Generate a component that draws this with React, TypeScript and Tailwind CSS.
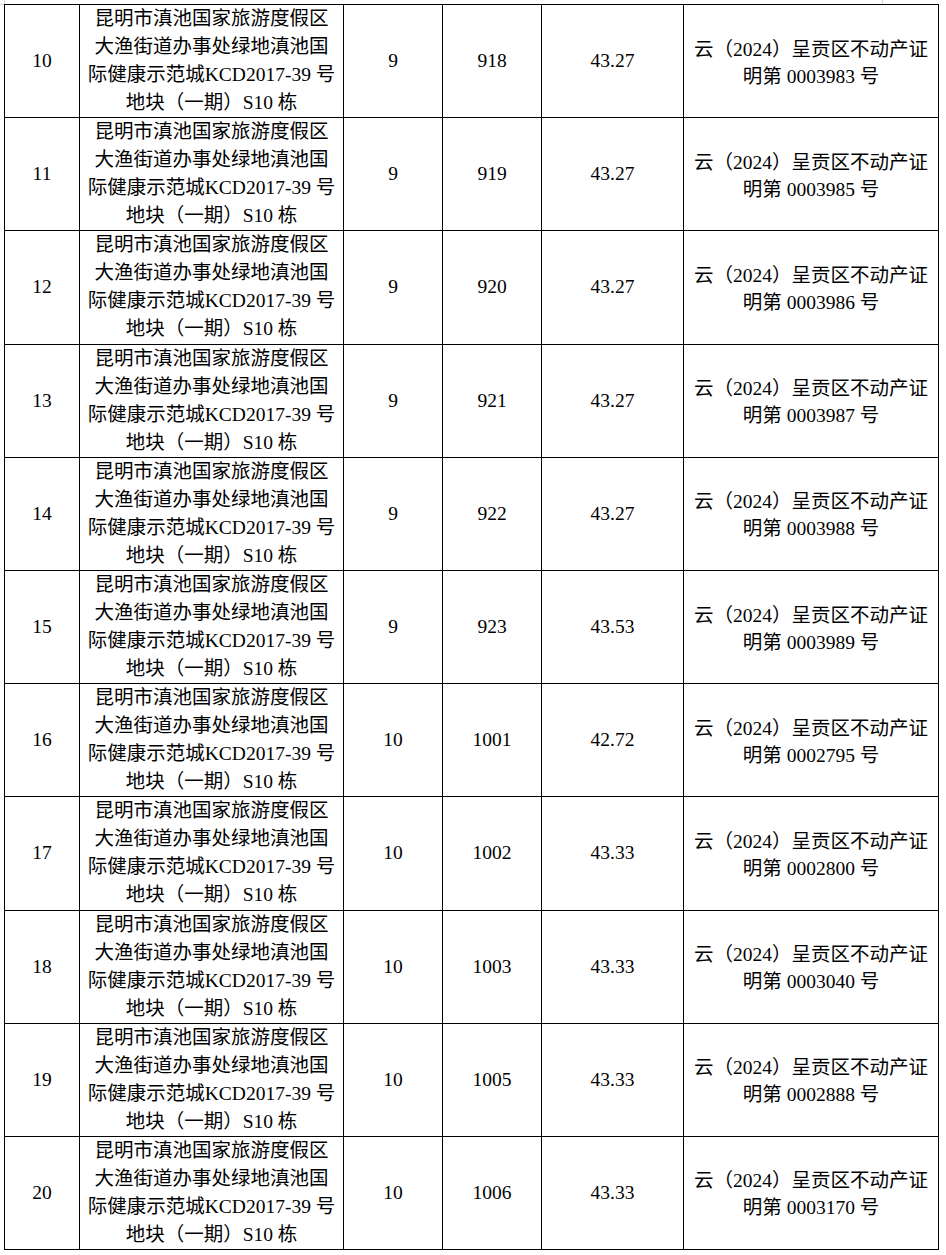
import React from "react";

type Row = {
  no: number;
  floor: number;
  room: number;
  area: string;
  cert: string;
};

const rows: Row[] = [
  { no: 10, floor: 9, room: 918, area: "43.27", cert: "0003983" },
  { no: 11, floor: 9, room: 919, area: "43.27", cert: "0003985" },
  { no: 12, floor: 9, room: 920, area: "43.27", cert: "0003986" },
  { no: 13, floor: 9, room: 921, area: "43.27", cert: "0003987" },
  { no: 14, floor: 9, room: 922, area: "43.27", cert: "0003988" },
  { no: 15, floor: 9, room: 923, area: "43.53", cert: "0003989" },
  { no: 16, floor: 10, room: 1001, area: "42.72", cert: "0002795" },
  { no: 17, floor: 10, room: 1002, area: "43.33", cert: "0002800" },
  { no: 18, floor: 10, room: 1003, area: "43.33", cert: "0003040" },
  { no: 19, floor: 10, room: 1005, area: "43.33", cert: "0002888" },
  { no: 20, floor: 10, room: 1006, area: "43.33", cert: "0003170" },
];

const address = [
  "昆明市滇池国家旅游度假区",
  "大渔街道办事处绿地滇池国",
  "际健康示范城KCD2017-39 号",
  "地块（一期）S10 栋",
];

const cell =
  "flex flex-col items-center justify-center border-r border-b border-black text-center whitespace-nowrap";

export default function App() {
  return (
    <div
      className="relative min-h-[1255px] w-[946px] bg-white text-[19.5px] leading-[28px] text-black"
      style={{ fontFamily: "'Liberation Serif', 'Noto Sans CJK SC', serif" }}
    >
      {/* crop marks */}
      <div className="absolute left-[4px] top-0 h-[4px] w-px bg-gray-300" />
      <div className="absolute left-0 top-[4px] h-px w-[4px] bg-gray-300" />
      <div className="absolute left-[882px] top-0 h-[4px] w-px bg-gray-300" />

      <div className="pl-[4px] pt-[4px]">
        <div className="w-[935px] border-l border-t border-black">
          {rows.map((r) => (
            <div
              key={r.no}
              className="grid h-[113.2px] grid-cols-[75px_264px_99px_99px_142px_255px]"
            >
              <div className={cell}>{r.no}</div>
              <div className={cell}>
                {address.map((line) => (
                  <div key={line}>{line}</div>
                ))}
              </div>
              <div className={cell}>{r.floor}</div>
              <div className={cell}>{r.room}</div>
              <div className={cell}>{r.area}</div>
              <div className={`${cell} pt-[3px] leading-[27px]`}>
                <div>云（2024）呈贡区不动产证</div>
                <div>明第 {r.cert} 号</div>
              </div>
            </div>
          ))}
        </div>
      </div>
    </div>
  );
}
